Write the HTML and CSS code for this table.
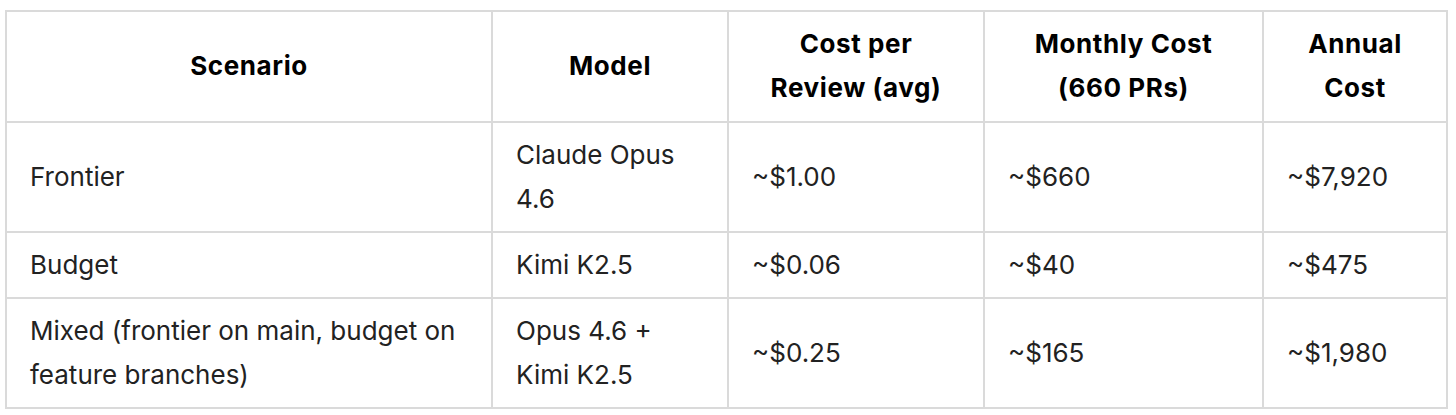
FILE: index.html
```html
<!DOCTYPE html>
<html lang="en">
<head>
<meta charset="utf-8">
<title>Cost table</title>
<link rel="stylesheet" href="styles.css">
</head>
<body>
<div class="wrap">
<table class="cost-table">
  <colgroup>
    <col class="c1"><col class="c2"><col class="c3"><col class="c4"><col class="c5">
  </colgroup>
  <thead>
    <tr>
      <th>Scenario</th>
      <th>Model</th>
      <th>Cost per<br>Review (avg)</th>
      <th>Monthly Cost<br>(660 PRs)</th>
      <th>Annual<br>Cost</th>
    </tr>
  </thead>
  <tbody>
    <tr>
      <td>Frontier</td>
      <td>Claude Opus<br>4.6</td>
      <td>~$1.00</td>
      <td>~$660</td>
      <td>~$7,920</td>
    </tr>
    <tr>
      <td>Budget</td>
      <td>Kimi K2.5</td>
      <td>~$0.06</td>
      <td>~$40</td>
      <td>~$475</td>
    </tr>
    <tr>
      <td>Mixed (frontier on main, budget on<br>feature branches)</td>
      <td>Opus 4.6 +<br>Kimi K2.5</td>
      <td>~$0.25</td>
      <td>~$165</td>
      <td>~$1,980</td>
    </tr>
  </tbody>
</table>
</div>
</body>
</html>
```

FILE: styles.css
```css
html, body {
  margin: 0;
  padding: 0;
  background: #ffffff;
}

.wrap {
  padding: 10px 0 0 5px;
}

.cost-table {
  border-collapse: separate;
  border-spacing: 0;
  table-layout: fixed;
  width: 1441px;
  border-top: 2px solid #dadada;
  border-left: 2px solid #dadada;
  font-family: Inter, "Noto Sans", "Liberation Sans", sans-serif;
  font-size: 26px;
  line-height: 44px;
  color: #222222;
}

.c1 { width: 486px; }
.c2 { width: 236px; }
.c3 { width: 256px; }
.c4 { width: 279px; }
.c5 { width: 184px; }

.cost-table th,
.cost-table td {
  border-right: 2px solid #dadada;
  border-bottom: 2px solid #dadada;
  vertical-align: middle;
}

.cost-table th {
  font-weight: 700;
  color: #000000;
  text-align: center;
  letter-spacing: 0.6px;
  padding: 10px 16px 11px;
}

.cost-table td {
  text-align: left;
  padding: 10px 16px 10px 23px;
}
```
